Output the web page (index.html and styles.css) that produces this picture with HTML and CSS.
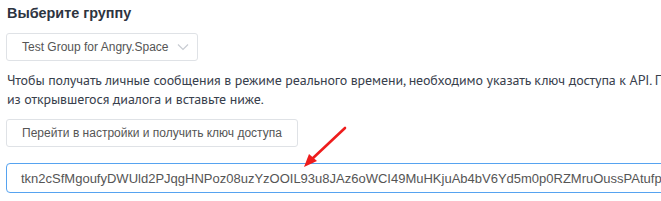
FILE: index.html
```html
<!DOCTYPE html>
<html lang="ru">
<head>
<meta charset="utf-8">
<link rel="stylesheet" href="styles.css">
</head>
<body>
<div class="page">
  <h3 class="title">Выберите группу</h3>
  <div class="select">
    <span class="select-text">Test Group for Angry.Space</span>
    <svg class="chevron" width="12" height="8" viewBox="0 0 12 8"><path d="M1 1.5 L6 6.5 L11 1.5" fill="none" stroke="#c8ccd2" stroke-width="1.2"/></svg>
  </div>
  <p class="desc">Чтобы получать личные сообщения в режиме реального времени, необходимо указать ключ доступа к API. Перейдите в настройки, скопируйте ключ доступа<br>из открывшегося диалога и вставьте ниже.</p>
  <div class="btn">Перейти в настройки и получить ключ доступа</div>
  <div class="input">tkn2cSfMgoufyDWUld2PJqgHNPoz08uzYzOOIL93u8JAz6oWCI49MuHKjuAb4bV6Yd5m0p0RZMruOussPAtufpXQ</div>
</div>
<svg class="arrow" width="661" height="201" viewBox="0 0 661 201">
  <line x1="345" y1="128" x2="312" y2="159" stroke="#ee1c1c" stroke-width="2.6" stroke-linecap="round"/>
  <polygon points="304,167 309,154 317,161" fill="#ee1c1c"/>
</svg>
</body>
</html>
```
FILE: styles.css
```css
html, body { margin: 0; padding: 0; background: #fff; }
body { width: 661px; height: 201px; overflow: hidden; position: relative; }
.page { padding: 4px 0 0 7px; width: 1100px; display: flex; flex-direction: column; align-items: flex-start; }
.title {
  margin: 0;
  font-family: "Liberation Sans", Arial, sans-serif;
  font-weight: bold;
  font-size: 14.4px;
  line-height: 18px;
  color: #2d3440;
}
.select {
  margin: 11px 0 0 -1px;
  height: 28px;
  box-sizing: border-box;
  border: 1px solid #dfe2e6;
  border-radius: 3px;
  display: inline-flex;
  align-items: center;
  padding: 0 8px 0 15px;
  font-family: "Liberation Sans", Arial, sans-serif;
  font-size: 12px;
  color: #555;
  white-space: nowrap;
}
.chevron { margin-left: 8px; }
.desc {
  margin: 10px 0 0 0;
  white-space: nowrap;
  font-family: "PT Sans", "Open Sans", sans-serif;
  font-size: 14px;
  letter-spacing: -0.1px;
  line-height: 19px;
  color: #38404c;
}
.btn {
  margin: 10px 0 0 -1px;
  height: 28px;
  box-sizing: border-box;
  border: 1px solid #dfe2e6;
  border-radius: 3px;
  display: inline-flex;
  align-items: center;
  padding: 0 15px 0 15px;
  font-family: "Liberation Sans", Arial, sans-serif;
  font-size: 12px;
  color: #555;
  white-space: nowrap;
}
.input {
  margin: 16px 0 0 -1px;
  width: 720px;
  height: 30px;
  box-sizing: border-box;
  border: 1px solid #56a3f0;
  border-radius: 4px;
  display: flex;
  align-items: center;
  padding-left: 14px;
  font-family: "Liberation Sans", Arial, sans-serif;
  font-size: 13px;
  color: #555;
  white-space: nowrap;
  overflow: hidden;
}
.arrow { position: absolute; left: 0; top: 0; pointer-events: none; }
```
